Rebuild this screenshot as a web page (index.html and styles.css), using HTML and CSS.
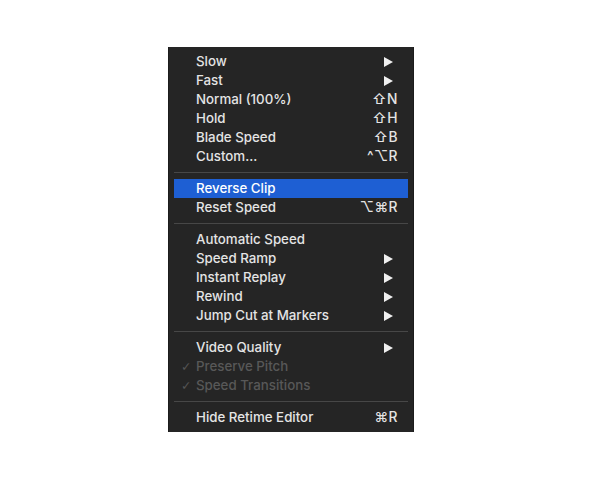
FILE: index.html
```html
<!DOCTYPE html>
<html>
<head>
<meta charset="utf-8">
<link rel="stylesheet" href="styles.css">
</head>
<body>
<div class="menu">
  <div class="row"><span class="label">Slow</span><span class="arrow"></span></div>
  <div class="row"><span class="label">Fast</span><span class="arrow"></span></div>
  <div class="row"><span class="label">Normal (100%)</span><span class="key">⇧N</span></div>
  <div class="row"><span class="label">Hold</span><span class="key">⇧H</span></div>
  <div class="row"><span class="label">Blade Speed</span><span class="key">⇧B</span></div>
  <div class="row"><span class="label">Custom...</span><span class="key">^⌥R</span></div>
  <div class="sep"></div>
  <div class="row selected"><span class="label">Reverse Clip</span></div>
  <div class="row"><span class="label">Reset Speed</span><span class="key">⌥⌘R</span></div>
  <div class="sep"></div>
  <div class="row"><span class="label">Automatic Speed</span></div>
  <div class="row"><span class="label">Speed Ramp</span><span class="arrow"></span></div>
  <div class="row"><span class="label">Instant Replay</span><span class="arrow"></span></div>
  <div class="row"><span class="label">Rewind</span><span class="arrow"></span></div>
  <div class="row"><span class="label">Jump Cut at Markers</span><span class="arrow"></span></div>
  <div class="sep"></div>
  <div class="row"><span class="label">Video Quality</span><span class="arrow"></span></div>
  <div class="row disabled"><span class="check">✓</span><span class="label">Preserve Pitch</span></div>
  <div class="row disabled"><span class="check">✓</span><span class="label">Speed Transitions</span></div>
  <div class="sep"></div>
  <div class="row"><span class="label">Hide Retime Editor</span><span class="key">⌘R</span></div>
</div>
</body>
</html>
```

FILE: styles.css
```css
html, body {
  margin: 0;
  padding: 0;
  background: #ffffff;
}

body {
  padding: 47px 0 0 168px;
}

.menu {
  width: 246px;
  height: 385px;
  box-sizing: border-box;
  background: #252525;
  padding: 5px 6px;
  display: flex;
  flex-direction: column;
  font-family: Inter, "Liberation Sans", "DejaVu Sans", sans-serif;
  font-size: 13.3px;
  font-weight: 500;
  color: #e4e4e4;
  box-shadow: inset 1px 0 0 #1c1c1c, inset -1px 0 0 #1c1c1c;
}

.row {
  position: relative;
  height: 19px;
  display: flex;
  align-items: center;
  padding: 0 10px 0 22px;
  line-height: 19px;
}

.label {
  flex: 1;
  white-space: nowrap;
}

.key {
  font-family: Inter, "DejaVu Sans", sans-serif;
  font-size: 13.8px;
  letter-spacing: 0.5px;
}

.arrow {
  width: 0;
  height: 0;
  border-top: 5px solid transparent;
  border-bottom: 5px solid transparent;
  border-left: 9px solid #f0f0f0;
  margin-right: 5px;
}

.selected {
  background: #1e5fd3;
  color: #ffffff;
}

.disabled {
  color: #585858;
}

.check {
  position: absolute;
  left: 7px;
  top: 0;
  font-family: "DejaVu Sans", sans-serif;
  font-size: 12.5px;
  color: #555555;
}

.sep {
  height: 13px;
  display: flex;
  align-items: center;
}

.sep::before {
  content: "";
  display: block;
  width: 100%;
  height: 1px;
  background: #474747;
}
```
